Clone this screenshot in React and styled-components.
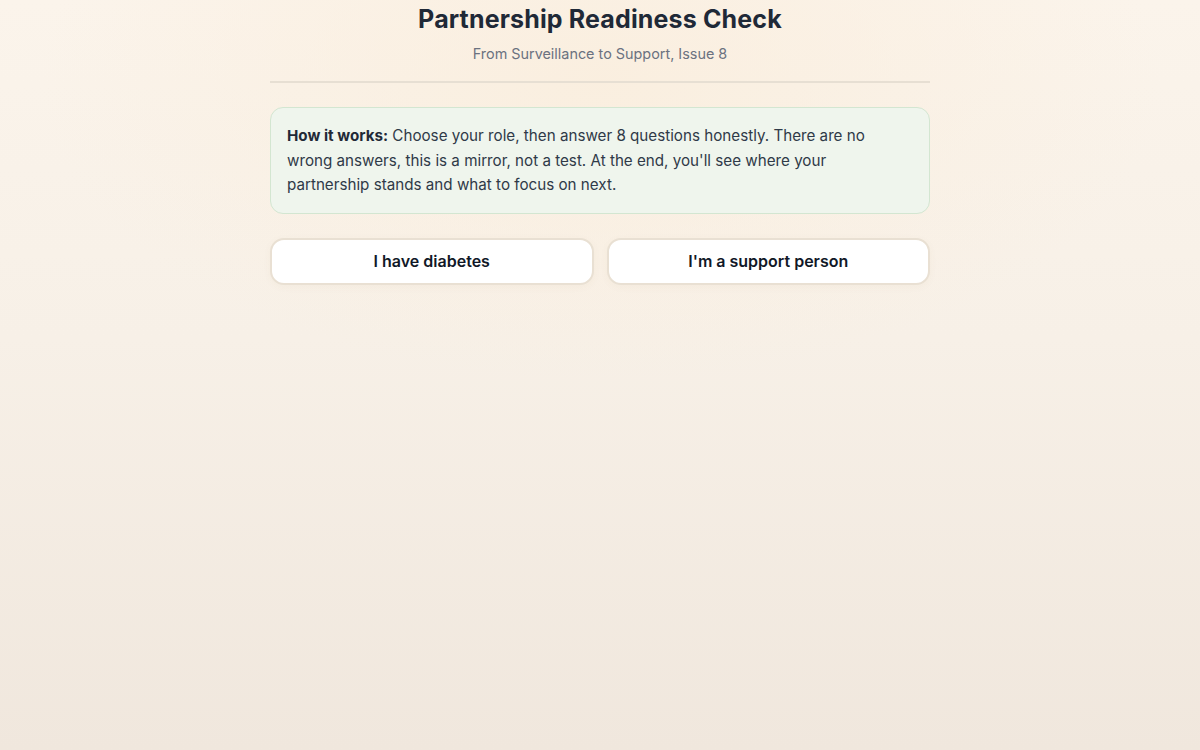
import React from "react";
import styled, { createGlobalStyle } from "styled-components";

const Global = createGlobalStyle`
  html, body { margin: 0; padding: 0; }
  body {
    min-height: 100vh;
    font-family: Inter, "Noto Sans", sans-serif;
    color: #1f2937;
    background:
      radial-gradient(ellipse 560px 300px at 50% 80px, rgba(250, 238, 222, 0.9), rgba(250, 238, 222, 0) 100%),
      linear-gradient(180deg, #fbf4eb 0%, #f7f0e7 45%, #f0e7dd 100%);
    background-attachment: fixed;
  }
`;

const Page = styled.main`
  width: 660px;
  margin: 0 auto;
  padding-top: 4px;
  display: flex;
  flex-direction: column;
`;

const Header = styled.header`
  text-align: center;
  padding-bottom: 16px;
  border-bottom: 2px solid #e7dfd3;
`;

const Title = styled.h1`
  margin: 0;
  font-family: Inter, "Noto Sans", sans-serif;
  font-weight: 700;
  font-size: 25px;
  line-height: 30px;
  letter-spacing: 0.15px;
  color: #1f2937;
`;

const Subtitle = styled.p`
  margin: 9px 0 0;
  font-size: 14.4px;
  line-height: 22px;
  color: #6b7280;
`;

const InfoBox = styled.section`
  margin-top: 24px;
  padding: 16px 50px 15px 16px;
  background: #eff5ed;
  border: 1px solid #d3e6d1;
  border-radius: 13px;
  font-size: 15.2px;
  line-height: 24.5px;
  color: #2f3a48;
`;

const Strong = styled.strong`
  font-weight: 700;
  color: #1f2937;
`;

const Roles = styled.div`
  margin-top: 24px;
  display: grid;
  grid-template-columns: 1fr 1fr;
  gap: 13px;
`;

const RoleButton = styled.button`
  height: 47px;
  background: #ffffff;
  border: 2px solid #e9e0d3;
  border-radius: 14px;
  font-family: Inter, "Noto Sans", sans-serif;
  font-weight: 600;
  font-size: 16px;
  color: #111827;
  cursor: pointer;
  box-shadow: 0 2px 8px rgba(120, 90, 50, 0.04);
`;

export default function App() {
  return (
    <>
      <Global />
      <Page>
        <Header>
          <Title>Partnership Readiness Check</Title>
          <Subtitle>From Surveillance to Support, Issue 8</Subtitle>
        </Header>
        <InfoBox>
          <Strong>How it works:</Strong> Choose your role, then answer 8 questions honestly. There are no
          wrong answers, this is a mirror, not a test. At the end, you'll see where your
          partnership stands and what to focus on next.
        </InfoBox>
        <Roles>
          <RoleButton>I have diabetes</RoleButton>
          <RoleButton>I'm a support person</RoleButton>
        </Roles>
      </Page>
    </>
  );
}
